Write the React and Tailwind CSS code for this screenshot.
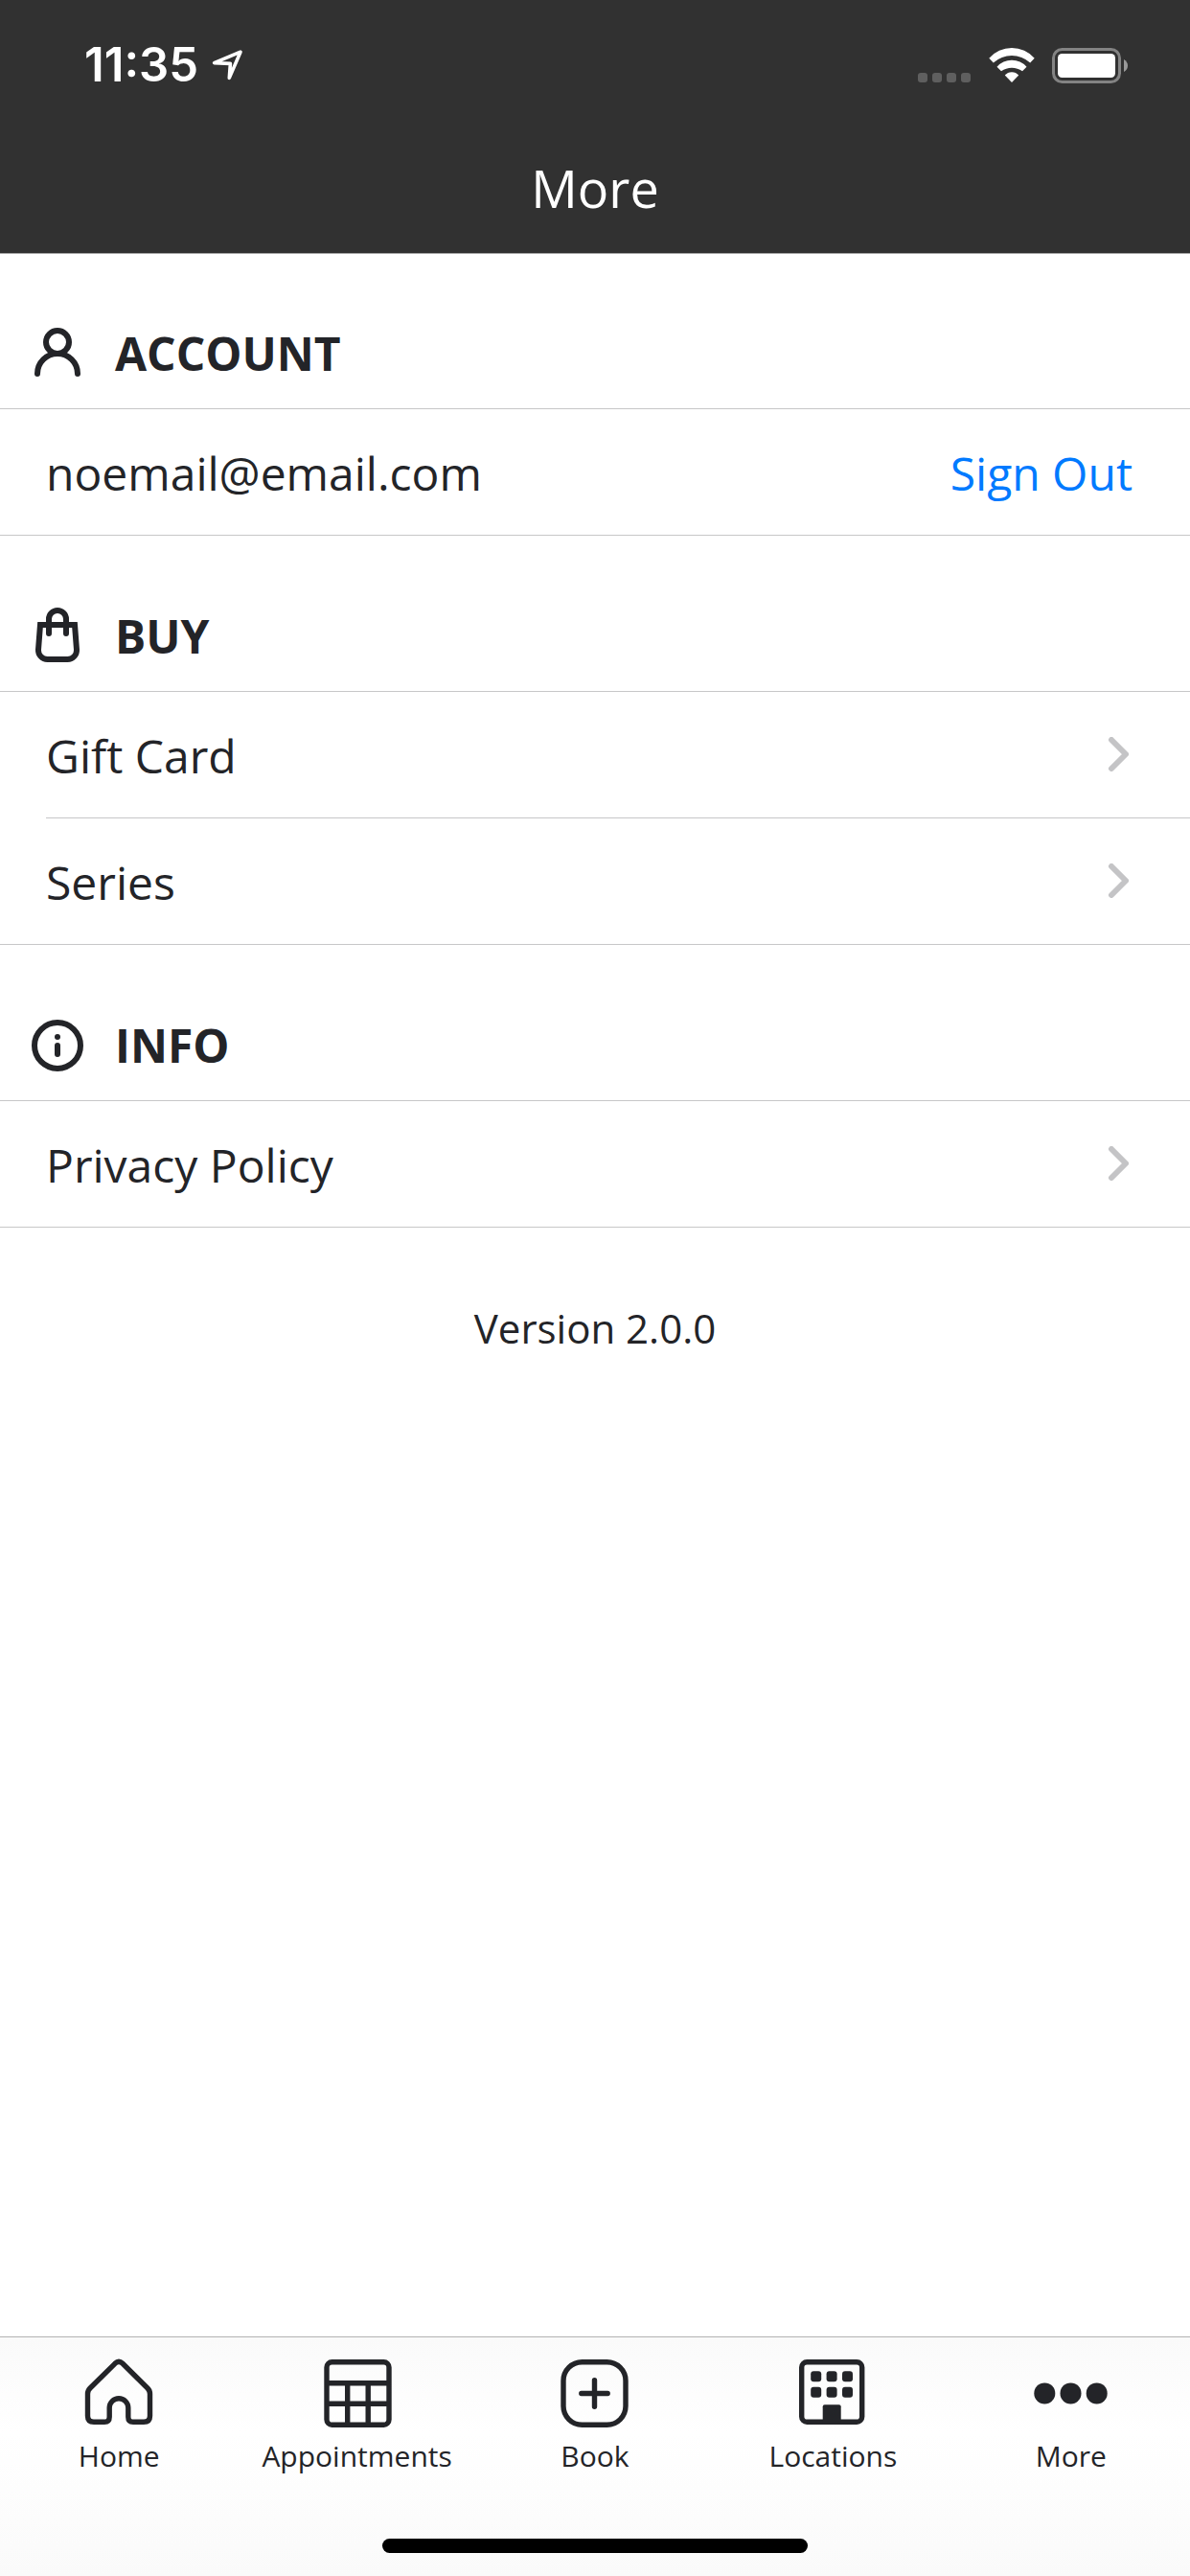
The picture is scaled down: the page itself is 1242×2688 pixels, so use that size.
import React from 'react';

const PersonIcon = () => (
  <svg className="size-[72px]" viewBox="0 0 72 72" fill="none" stroke="currentColor" strokeWidth="6" strokeLinecap="round">
    <circle cx="36" cy="24" r="12" />
    <path d="M15 57A21 21 0 0 1 57 57" />
  </svg>
);

const BagIcon = () => (
  <svg className="size-[72px]" viewBox="0 0 72 72" fill="none" stroke="currentColor" strokeWidth="6" strokeLinecap="round">
    <path d="M18 24H54L56 50A9.5 9.5 0 0 1 46.5 60H25.5A9.5 9.5 0 0 1 16 50Z" />
    <path d="M27 33V18A9 9 0 0 1 45 18V33" />
  </svg>
);

const InfoIcon = () => (
  <svg className="size-[72px]" viewBox="0 0 72 72" fill="none" stroke="currentColor" strokeWidth="6" strokeLinecap="round">
    <circle cx="36" cy="36" r="24" />
    <circle cx="36" cy="27" r="3" fill="currentColor" stroke="none" />
    <path d="M36 36V45" />
  </svg>
);

const ChevronIcon = () => (
  <svg className="w-[24px] h-[36px]" viewBox="0 0 24 36" fill="none" stroke="currentColor" strokeWidth="6" strokeLinecap="round" strokeLinejoin="round">
    <path d="M6 3L21 18L6 33" />
  </svg>
);

const HomeIcon = () => (
  <svg className="size-20" viewBox="0 0 80 80" fill="none" stroke="currentColor" strokeWidth="5.4">
    <path d="M36 8.3L10 34Q7.5 36.5 7.5 40V63Q7.5 69.3 14 69.3H25Q30.2 69.3 30.2 64V54.5A9.8 9.8 0 0 1 49.8 54.5V64Q49.8 69.3 55 69.3H66Q72.5 69.3 72.5 63V40Q72.5 36.5 70 34L44 8.3Q40 4.6 36 8.3Z" />
  </svg>
);

const CalendarIcon = () => (
  <svg className="size-20" viewBox="0 0 80 80" fill="none" stroke="currentColor" strokeWidth="5.4">
    <rect x="8" y="6.7" width="65" height="65.6" rx="5.5" />
    <path d="M8 28.7H73M8 50.3H73M29.7 28.7V72M51.2 28.7V72" />
  </svg>
);

const BookIcon = () => (
  <svg className="size-20" viewBox="0 0 80 80" fill="none" stroke="currentColor" strokeWidth="5.4" strokeLinecap="round">
    <rect x="7" y="6.7" width="65" height="65.6" rx="19.5" />
    <path d="M39.5 25.8V53.2M25.8 39.5H53.2" />
  </svg>
);

const LocationsIcon = () => (
  <svg className="size-20" viewBox="0 0 80 80" fill="currentColor">
    <rect x="7.7" y="6.7" width="63" height="62.6" rx="5.5" fill="none" stroke="currentColor" strokeWidth="5.4" />
    <rect x="17.2" y="16.3" width="11" height="11" rx="3" />
    <rect x="33.6" y="16.3" width="11" height="11" rx="3" />
    <rect x="50" y="16.3" width="11" height="11" rx="3" />
    <rect x="17.2" y="32.7" width="11" height="11" rx="3" />
    <rect x="33.6" y="32.7" width="11" height="11" rx="3" />
    <rect x="50" y="32.7" width="11" height="11" rx="3" />
    <path d="M29.7 70V53.3Q29.7 51.3 31.7 51.3H46.7Q48.7 51.3 48.7 53.3V70Z" />
  </svg>
);

const MoreIcon = () => (
  <svg className="size-20" viewBox="0 0 80 80" fill="currentColor">
    <circle cx="12.3" cy="39.4" r="11" />
    <circle cx="39.5" cy="39.4" r="11" />
    <circle cx="66.7" cy="39.4" r="11" />
  </svg>
);

const sections = [
  { title: 'BUY', icon: BagIcon, items: ['Gift Card', 'Series'] },
  { title: 'INFO', icon: InfoIcon, items: ['Privacy Policy'] },
];

const tabs = [
  { label: 'Home', icon: HomeIcon },
  { label: 'Appointments', icon: CalendarIcon },
  { label: 'Book', icon: BookIcon },
  { label: 'Locations', icon: LocationsIcon },
  { label: 'More', icon: MoreIcon },
];

const StatusBar = () => (
  <div className="flex items-center justify-between h-[136px] pl-[88px] pr-16">
    <div className="flex items-center gap-[14px]">
      <span className="font-['Inter',sans-serif] font-semibold text-[49px] leading-[60px]">11:35</span>
      <svg className="size-[34px]" viewBox="0 0 34 34" fill="none" stroke="currentColor" strokeWidth="3.6" strokeLinejoin="round">
        <path d="M30 3.2L2.6 14.6L19.4 15.4L18.3 30.4Z" />
      </svg>
    </div>
    <div className="flex items-end">
      <div className="flex gap-[5px] mr-[19px] pb-px">
        {[0, 1, 2, 3].map((i) => (
          <span key={i} className="size-[10px] rounded-[3px] bg-[#5f5f5f]" />
        ))}
      </div>
      <svg className="w-[48px] h-[36px] mr-[18px] mb-px" viewBox="0 0 48 36" fill="currentColor">
        <path d="M0.3 10.7A31.6 31.6 0 0 1 47.7 10.7L43.2 15.4A28.6 28.6 0 0 0 4.8 15.4Z" />
        <path d="M8.5 19.7A20.7 20.7 0 0 1 39.5 19.7L35 24.3A18.6 18.6 0 0 0 13 24.3Z" />
        <path d="M16.8 28.6A9.3 9.3 0 0 1 31.2 28.6L24 36Z" />
      </svg>
      <svg className="w-[80px] h-[37px]" viewBox="0 0 80 37">
        <rect x="1.5" y="1.5" width="69" height="34" rx="9" fill="none" stroke="#838383" strokeWidth="3" />
        <rect x="6" y="6" width="60" height="25" rx="4.5" fill="#fff" />
        <path d="M75 12Q79 14.5 79 18.5Q79 22.5 75 25Z" fill="#9a9a9a" />
      </svg>
    </div>
  </div>
);

const Section = ({ title, icon: Icon, children }) => (
  <section>
    <h2 className="flex items-end gap-6 h-[162px] pl-6 pb-[21px] border-b border-[#c7c7c8] font-bold text-5xl leading-[72px]">
      <Icon />
      {title}
    </h2>
    {children}
  </section>
);

const App = () => {
  return (
    <div className="flex flex-col min-h-screen bg-white text-[#232428] font-['Open_Sans',sans-serif]">
      <header className="bg-[#313131] border-b border-[#a8a8a8] text-white">
        <StatusBar />
        <div className="flex items-center justify-center h-32 pb-2">
          <h1 className="text-[54px] leading-[72px]">More</h1>
        </div>
      </header>

      <main className="flex-1 space-y-px">
        <Section title="ACCOUNT" icon={PersonIcon}>
          <div className="flex items-center justify-between h-[132px] pt-[3px] pl-12 pr-[60px] border-b border-[#c7c7c8] text-5xl">
            <span>noemail@email.com</span>
            <button className="text-[#007aff]">Sign Out</button>
          </div>
        </Section>

        {sections.map((section) => (
          <Section key={section.title} title={section.title} icon={section.icon}>
            <ul className="pl-12 border-b border-[#c7c7c8] divide-y divide-[#c7c7c8]">
              {section.items.map((item) => (
                <li key={item}>
                  <button className="flex items-center justify-between w-full h-[131px] pt-[3px] pr-16 text-left text-5xl">
                    {item}
                    <span className="pb-1 text-[#c4c4c6]"><ChevronIcon /></span>
                  </button>
                </li>
              ))}
            </ul>
          </Section>
        ))}

        <p className="pt-[74px] text-center text-[42px] leading-[60px]">Version 2.0.0</p>
      </main>

      <footer className="border-t border-[#b2b2b2] bg-linear-to-b from-[#fafafa] via-white via-40% to-[#fafafa]">
        <nav className="grid grid-cols-5 pt-[19px]">
          {tabs.map(({ label, icon: Icon }) => (
            <button key={label} className="flex flex-col items-center gap-[5px] text-3xl leading-10">
              <Icon />
              {label}
            </button>
          ))}
        </nav>
        {/* Home indicator */}
        <div className="w-[444px] h-[15px] mx-auto mt-[66px] mb-6 rounded-full bg-black" />
      </footer>
    </div>
  );
};

export default App;
